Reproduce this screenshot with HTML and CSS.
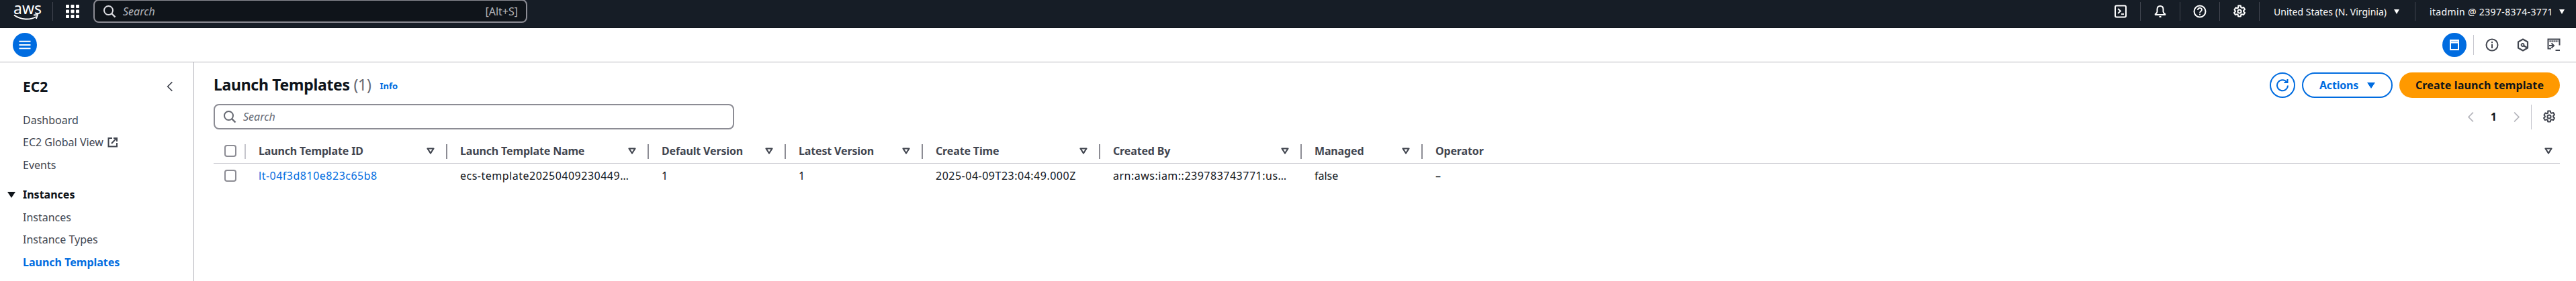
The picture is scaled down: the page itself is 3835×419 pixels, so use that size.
FILE: index.html
```html
<!DOCTYPE html>
<html lang="en">
<head>
    <meta charset="UTF-8">
    <title>Launch Templates | EC2</title>
    <link rel="stylesheet" href="styles.css">
</head>
<body>
    <svg class="defs" width="0" height="0">
        <symbol id="gear" viewBox="0 0 20 20">
            <circle cx="10" cy="10" r="2.6" fill="none" stroke="currentColor" stroke-width="2"/>
            <path d="M8.2 1.500h3.600l.5 2.500 1.500.8 2.400-.8 1.800 3.100-1.900 1.700v1.400l1.900 1.700-1.800 3.100-2.400-.8-1.500.8-.5 2.500H8.200l-.5-2.500-1.500-.8-2.400.8-1.800-3.100 1.900-1.700V9.300L2.500 7.600l1.800-3.100 2.400.8 1.500-.8z" fill="none" stroke="currentColor" stroke-width="2" stroke-linejoin="round"/>
        </symbol>
        <symbol id="search" viewBox="0 0 20 20">
            <circle cx="8.500" cy="8.500" r="6.500" fill="none" stroke="currentColor" stroke-width="2"/>
            <path d="M13 13l5.500 5.500" fill="none" stroke="currentColor" stroke-width="2.400"/>
        </symbol>
        <symbol id="filter" viewBox="0 0 16 16">
            <path d="M3.500 4.500h9L8 11.500z" fill="none" stroke="currentColor" stroke-width="2.200" stroke-linejoin="round"/>
        </symbol>
    </svg>

    <header class="topbar">
        <div class="logo">
            <span class="logo-text">aws</span>
            <svg class="logo-smile" viewBox="0 0 38 10"><path d="M1 1.500c10 7.500 24 7.500 33 2.500" fill="none" stroke="#fff" stroke-width="2"/><path d="M30 1.500l6-.5-2 6" fill="none" stroke="#fff" stroke-width="1.800"/></svg>
        </div>
        <span class="top-sep first"></span>
        <svg class="grid-icon" viewBox="0 0 20 20" fill="#fff">
            <rect x="0" y="0" width="5" height="5" rx="1"/><rect x="7.500" y="0" width="5" height="5" rx="1"/><rect x="15" y="0" width="5" height="5" rx="1"/>
            <rect x="0" y="7.500" width="5" height="5" rx="1"/><rect x="7.500" y="7.500" width="5" height="5" rx="1"/><rect x="15" y="7.500" width="5" height="5" rx="1"/>
            <rect x="0" y="15" width="5" height="5" rx="1"/><rect x="7.500" y="15" width="5" height="5" rx="1"/><rect x="15" y="15" width="5" height="5" rx="1"/>
        </svg>
        <div class="top-search">
            <svg class="icon-20"><use href="#search"/></svg>
            <span class="top-search-text">Search</span>
            <span class="top-search-key">[Alt+S]</span>
        </div>
        <div class="top-right">
            <span class="top-item"><svg class="icon-20" viewBox="0 0 20 20" fill="none" stroke="#fff" stroke-width="2"><rect x="2" y="1.500" width="16" height="17" rx="2"/><path d="M6 6l4 3.500-4 3.500" stroke-width="1.800"/><path d="M11 14h4" stroke-width="1.800"/></svg></span>
            <span class="top-sep"></span>
            <span class="top-item"><svg class="icon-20" viewBox="0 0 20 20" fill="none" stroke="#fff" stroke-width="2" stroke-linejoin="round"><path d="M10 2c-3 0-4.500 2.200-4.500 5v3.500c0 1.500-1.200 2.500-2.800 3.500v1h14.600v-1c-1.600-1-2.800-2-2.800-3.500V7c0-2.800-1.500-5-4.500-5z"/><path d="M8.500 18h3"/></svg></span>
            <span class="top-sep"></span>
            <span class="top-item"><svg class="icon-20" viewBox="0 0 20 20" fill="none" stroke="#fff" stroke-width="2"><circle cx="10" cy="10" r="8.500"/><path d="M7 8c0-4 6-4 6-.5 0 2.200-3 2.200-3 4.500" stroke-width="1.800"/><path d="M10 13.500v2" stroke-width="1.800"/></svg></span>
            <span class="top-sep"></span>
            <span class="top-item"><svg class="icon-20"><use href="#gear"/></svg></span>
            <span class="top-sep"></span>
            <span class="top-menu region">United States (N. Virginia)<i class="tri"></i></span>
            <span class="top-sep"></span>
            <span class="top-menu account">itadmin @ 2397-8374-3771<i class="tri"></i></span>
        </div>
    </header>

    <div class="subbar">
        <span class="round-btn">
            <svg class="icon-20" viewBox="0 0 20 20" fill="none" stroke="#fff" stroke-width="2"><path d="M1.500 4.700h17M1.500 10h17M1.500 15.300h17"/></svg>
        </span>
        <div class="subbar-right">
            <span class="round-btn">
                <svg class="icon-20" viewBox="0 0 20 20" fill="none" stroke="#fff" stroke-width="2"><rect x="4" y="3" width="12" height="14"/><path d="M4 6h12" stroke-width="3"/></svg>
            </span>
            <span class="sub-sep"></span>
            <span class="sub-item"><svg class="icon-20" viewBox="0 0 20 20" fill="none" stroke="#424650" stroke-width="2"><circle cx="10" cy="10" r="8.500"/><path d="M10 9v6M10 5v2.200"/></svg></span>
            <span class="sub-item"><svg class="icon-20" viewBox="0 0 20 20" fill="none" stroke="#424650" stroke-width="2.200" stroke-linejoin="round"><path d="M10 1.500l7 4v9l-7 4-7-4v-9z"/><circle cx="9.500" cy="10" r="2" stroke-width="1.800"/><path d="M11 11l5 3"/></svg></span>
            <span class="sub-item"><svg class="icon-20" viewBox="0 0 20 20" fill="none" stroke="#424650" stroke-width="2"><path d="M6 15.500H1.500V1.500h17v9"/><path d="M3.500 4.500h13" stroke-width="2.500" stroke-dasharray="2 1"/><path d="M3 11h6.500M6.500 7.500l3.500 3.500-3.500 3.500"/><path d="M12.500 18h6.500"/></svg></span>
        </div>
    </div>

    <div class="layout">
        <nav class="sidebar">
            <div class="side-head">
                <span class="side-title">EC2</span>
                <svg class="side-close" viewBox="0 0 12 20" fill="none" stroke="#424650" stroke-width="2"><path d="M10 2L2 10l8 8"/></svg>
            </div>
            <a class="side-link">Dashboard</a>
            <a class="side-link">EC2 Global View<svg class="ext-icon" viewBox="0 0 16 16" fill="none" stroke="#424650" stroke-width="2"><path d="M7 2H1.500v12.500H14V9"/><path d="M6 10l7-7.500M9 2h5v5"/></svg></a>
            <a class="side-link">Events</a>
            <div class="side-group"><i class="tri tri-dark"></i>Instances</div>
            <a class="side-link">Instances</a>
            <a class="side-link">Instance Types</a>
            <a class="side-link active">Launch Templates</a>
        </nav>

        <main class="content">
            <div class="page-head">
                <div class="title-row">
                    <h1>Launch Templates <span class="count">(1)</span></h1>
                    <a class="info">Info</a>
                </div>
                <div class="actions">
                    <span class="btn-circle">
                        <svg class="icon-20" viewBox="0 0 20 20" fill="none" stroke="#006ce0" stroke-width="2"><path d="M16.500 5.500a8 8 0 1 0 1.500 5"/><path d="M17.500 1v5h-5"/></svg>
                    </span>
                    <span class="btn-outline">Actions<i class="tri tri-blue"></i></span>
                    <span class="btn-primary">Create launch template</span>
                </div>
            </div>

            <div class="filter-row">
                <div class="table-search">
                    <svg class="icon-20"><use href="#search"/></svg>
                    <span>Search</span>
                </div>
                <div class="pager">
                    <svg class="pager-arrow" viewBox="0 0 12 20" fill="none" stroke="#b4b4bb" stroke-width="2"><path d="M10 2L2 10l8 8"/></svg>
                    <span class="page-num">1</span>
                    <svg class="pager-arrow" viewBox="0 0 12 20" fill="none" stroke="#b4b4bb" stroke-width="2"><path d="M2 2l8 8-8 8"/></svg>
                    <span class="pager-sep"></span>
                    <svg class="icon-20 pager-gear"><use href="#gear"/></svg>
                </div>
            </div>

            <div class="table">
                <div class="cell head check"><span class="checkbox"></span><span class="col-sep light"></span></div>
                <div class="cell head">Launch Template ID<svg class="filter"><use href="#filter"/></svg><span class="col-sep"></span></div>
                <div class="cell head">Launch Template Name<svg class="filter"><use href="#filter"/></svg><span class="col-sep"></span></div>
                <div class="cell head">Default Version<svg class="filter"><use href="#filter"/></svg><span class="col-sep"></span></div>
                <div class="cell head">Latest Version<svg class="filter"><use href="#filter"/></svg><span class="col-sep"></span></div>
                <div class="cell head">Create Time<svg class="filter"><use href="#filter"/></svg><span class="col-sep"></span></div>
                <div class="cell head">Created By<svg class="filter"><use href="#filter"/></svg><span class="col-sep"></span></div>
                <div class="cell head">Managed<svg class="filter"><use href="#filter"/></svg><span class="col-sep"></span></div>
                <div class="cell head">Operator<svg class="filter last"><use href="#filter"/></svg></div>

                <div class="cell check"><span class="checkbox"></span></div>
                <div class="cell digits"><a class="link">lt-04f3d810e823c65b8</a></div>
                <div class="cell digits">ecs-template20250409230449…</div>
                <div class="cell">1</div>
                <div class="cell">1</div>
                <div class="cell digits">2025-04-09T23:04:49.000Z</div>
                <div class="cell digits">arn:aws:iam::239783743771:us…</div>
                <div class="cell">false</div>
                <div class="cell">–</div>
            </div>
        </main>
    </div>
</body>
</html>
```

FILE: styles.css
```css
html {
    overflow: hidden;
}
body {
    margin: 0;
    height: 419px;
    overflow: hidden;
    background: #fff;
    color: #0f141a;
    font-family: "Noto Sans", "Open Sans", sans-serif;
    font-size: 16px;
}
.defs {
    position: absolute;
}
.icon-20 {
    display: block;
    width: 20px;
    height: 20px;
}
.tri {
    display: inline-block;
    flex: none;
    width: 0;
    height: 0;
    border-left: 4.500px solid transparent;
    border-right: 4.500px solid transparent;
    border-top: 7px solid #fff;
}

/* top bar */
.topbar {
    display: flex;
    align-items: flex-start;
    height: 41px;
    background: #161d26;
    color: #fff;
    border-bottom: 1px solid #0f141a;
}
.logo {
    width: 38px;
    height: 28px;
    margin: 3px 0 0 20px;
}
.logo-text {
    display: block;
    font-size: 23px;
    line-height: 18px;
    text-align: center;
}
.logo-smile {
    display: block;
    width: 38px;
    height: 10px;
}
.top-sep {
    display: block;
    width: 1px;
    height: 28px;
    margin-top: 3px;
    background: #424650;
}
.top-sep.first {
    margin-left: 20px;
}
.grid-icon {
    width: 20px;
    height: 20px;
    margin: 7px 21px 0 19px;
}
.top-search {
    display: flex;
    align-items: center;
    gap: 10px;
    width: 618px;
    height: 31px;
    margin-top: -1px;
    padding: 0 12px;
    background: #0f141a;
    border: 2px solid #8c8c94;
    border-radius: 8px;
    color: #dedee3;
}
.top-search-text {
    flex: 1;
    font-style: italic;
    color: #b4b4bb;
}
.top-search-key {
    font-size: 16px;
    color: #b4b4bb;
}
.top-right {
    display: flex;
    align-items: flex-start;
    margin-left: auto;
}
.top-item {
    width: 58px;
    display: flex;
    justify-content: center;
    padding-top: 7px;
}
.top-menu {
    display: flex;
    align-items: center;
    justify-content: space-between;
    box-sizing: border-box;
    height: 34px;
    padding-left: 21px;
    font-size: 14px;
    white-space: nowrap;
}
.region {
    width: 231px;
    padding-right: 23px;
}
.account {
    width: 239px;
    padding-right: 17px;
    letter-spacing: .35px;
}

/* second bar */
.subbar {
    display: flex;
    align-items: center;
    height: 50px;
    padding: 0 10px 0 19px;
    border-bottom: 1px solid #b4b4bb;
}
.round-btn {
    display: flex;
    align-items: center;
    justify-content: center;
    width: 36px;
    height: 36px;
    border-radius: 50%;
    background: #006ce0;
}
.subbar-right {
    display: flex;
    align-items: center;
    margin-left: auto;
}
.sub-sep {
    width: 1px;
    height: 30px;
    margin: 0 4px 0 10px;
    background: #c6c6cd;
}
.sub-item {
    width: 46px;
    display: flex;
    justify-content: center;
}

.layout {
    display: flex;
    height: 326px;
    overflow: hidden;
}

/* side navigation */
.sidebar {
    width: 289px;
    flex: none;
    padding-top: 19px;
    box-sizing: border-box;
    border-right: 1px solid #b4b4bb;
}
.side-head {
    display: flex;
    align-items: center;
    justify-content: space-between;
    padding: 0 30px 0 34px;
    height: 34px;
    margin-bottom: 16px;
}
.side-title {
    font-size: 21px;
    font-weight: 700;
}
.side-close {
    width: 10px;
    height: 18px;
}
.side-link {
    display: flex;
    align-items: center;
    height: 33.600px;
    padding-left: 34px;
    color: #424650;
    white-space: nowrap;
}
.ext-icon {
    width: 16px;
    height: 16px;
    margin-left: 6px;
}
.side-link.active {
    color: #006ce0;
    font-weight: 700;
}
.side-group {
    display: flex;
    align-items: center;
    height: 33.600px;
    margin-top: 10.600px;
    font-weight: 700;
}
.tri-dark {
    margin: 0 11px 0 11px;
    border-left-width: 6px;
    border-right-width: 6px;
    border-top: 9px solid #0f141a;
}

/* main content */
.content {
    flex: 1;
    min-width: 0;
    padding: 15px 24px 0 29px;
}
.page-head {
    display: flex;
    justify-content: space-between;
    align-items: flex-start;
    height: 47px;
}
.title-row {
    display: flex;
    align-items: center;
    gap: 13px;
    height: 36px;
}
h1 {
    margin: 0;
    font-size: 23px;
    font-weight: 700;
    letter-spacing: -.3px;
    white-space: nowrap;
}
.count {
    color: #656871;
    font-weight: 400;
}
.info {
    color: #006ce0;
    font-size: 13px;
    font-weight: 700;
    padding-top: 3px;
}
.actions {
    display: flex;
    align-items: center;
    gap: 10px;
}
.btn-circle {
    display: flex;
    align-items: center;
    justify-content: center;
    width: 34px;
    height: 34px;
    border: 2px solid #006ce0;
    border-radius: 50%;
}
.btn-outline {
    display: flex;
    align-items: center;
    justify-content: center;
    width: 131px;
    height: 34px;
    border: 2px solid #006ce0;
    border-radius: 19px;
    color: #006ce0;
    font-weight: 700;
    letter-spacing: -.2px;
}
.tri-blue {
    margin-left: 13px;
    border-left-width: 6px;
    border-right-width: 6px;
    border-top: 9px solid #006ce0;
}
.btn-primary {
    display: flex;
    align-items: center;
    justify-content: center;
    width: 239px;
    height: 38px;
    border-radius: 19px;
    background: #ff9900;
    font-weight: 700;
    letter-spacing: .15px;
}
.filter-row {
    display: flex;
    align-items: center;
    justify-content: space-between;
    height: 38px;
}
.table-search {
    display: flex;
    align-items: center;
    gap: 10px;
    width: 747px;
    height: 34px;
    padding: 0 12px;
    border: 2px solid #8c8c94;
    border-radius: 8px;
    color: #656871;
    font-style: italic;
}
.pager {
    display: flex;
    align-items: center;
    padding-right: 6px;
}
.pager-arrow {
    width: 11px;
    height: 17px;
}
.page-num {
    margin: 0 24px;
    font-weight: 700;
}
.pager-sep {
    width: 1px;
    height: 37px;
    margin: 0 16px;
    background: #c6c6cd;
}
.pager-gear {
    color: #424650;
}

/* table */
.table {
    display: grid;
    grid-template-columns: 48px 300px 300px 204px 204px 264px 300px 180px 1fr;
    grid-template-rows: 37px 36px;
    margin-top: 14px;
}
.cell {
    position: relative;
    display: flex;
    align-items: center;
    padding-left: 19px;
    white-space: nowrap;
}
.cell.head {
    color: #424650;
    font-weight: 700;
    letter-spacing: -.15px;
    border-bottom: 1px solid #c6c6cd;
    padding-bottom: 1px;
}
.cell.check {
    padding-left: 16px;
}
.cell.digits {
    letter-spacing: .5px;
}
.checkbox {
    display: block;
    width: 14px;
    height: 14px;
    border: 2px solid #8c8c94;
    border-radius: 4px;
}
.filter {
    position: absolute;
    right: 17px;
    top: 10px;
    width: 16px;
    height: 16px;
    color: #424650;
}
.filter.last {
    right: 9px;
}
.col-sep {
    position: absolute;
    right: 0;
    top: 8px;
    width: 2px;
    height: 22px;
    background: #8c8c94;
}
.col-sep.light {
    background: #c6c6cd;
}
.link {
    color: #006ce0;
}
```
